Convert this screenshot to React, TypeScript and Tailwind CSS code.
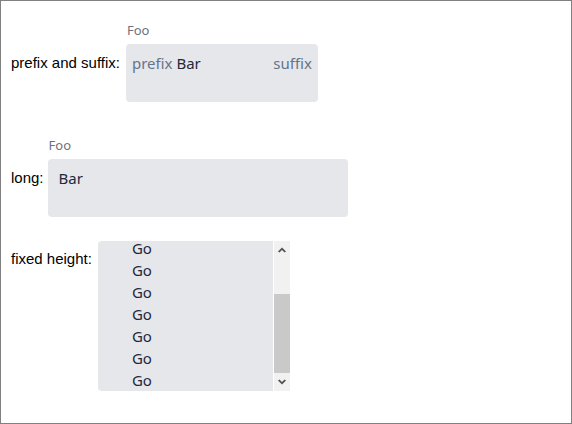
import { useEffect, useRef } from "react";

// ── Field with floating caption + prefix / suffix ─────────────────────────────

const BOX_FONT = { fontFamily: '"Noto Sans", "Open Sans", sans-serif' };

function Caption({ text }: { text: string }) {
  return (
    <div className="mb-[5px] pl-[1px] text-[13px] leading-[18px] text-[#6b7280]" style={BOX_FONT}>
      {text}
    </div>
  );
}

// ── Classic scrollbar (drawn, the native one is overlay in headless) ─────────

function Chevron({ up }: { up?: boolean }) {
  return (
    <svg width="16" height="17" viewBox="0 0 16 17" className={up ? "" : "rotate-180"}>
      <path d="M4 10.5 L8 6.5 L12 10.5 L10.6 11.5 L8 9 L5.4 11.5 Z" fill="#505050" />
    </svg>
  );
}

function Scrollbar() {
  return (
    <div className="ml-[1px] flex w-[16px] flex-col bg-[#f1f1f1]">
      <Chevron up />
      <div className="flex-1 pt-[36px]">
        <div className="h-[79px] bg-[#c9c9c9]" />
      </div>
      <Chevron />
    </div>
  );
}

// ── Page ───────────────────────────────────────────────────────────────────────

export default function App() {
  const listRef = useRef<HTMLDivElement>(null);

  // the list sits scrolled to the bottom in the reference
  useEffect(() => {
    if (listRef.current) listRef.current.scrollTop = listRef.current.scrollHeight;
  }, []);

  return (
    <div
      className="h-[424px] w-[572px] overflow-hidden border border-[#808080] bg-white pl-[10px] pt-[20px] text-[15px] text-black"
      style={{ fontFamily: '"Liberation Sans", Arial, sans-serif' }}
    >
      {/* prefix and suffix */}
      <div className="flex items-start">
        <label className="mt-[32px] leading-[20px]">prefix and suffix:</label>
        <div className="ml-[6px]">
          <Caption text="Foo" />
          <div
            className="flex h-[58px] w-[192px] justify-between rounded-[4px] bg-[#e5e7eb] px-[6px] pt-[9px] text-[15px] leading-[20px]"
            style={BOX_FONT}
          >
            <span>
              <span className="text-[#64748b]">prefix</span>{" "}
              <span className="text-[#1e293b]">Bar</span>
            </span>
            <span className="text-[#64748b]">suffix</span>
          </div>
        </div>
      </div>

      {/* long */}
      <div className="mt-[34px] flex items-start">
        <label className="mt-[32px] leading-[20px]">long:</label>
        <div className="ml-[4px]">
          <Caption text="Foo" />
          <div
            className="h-[58px] w-[300px] rounded-[4px] bg-[#e5e7eb] px-[11px] pt-[9px] text-[15px] leading-[20px] text-[#1e293b]"
            style={BOX_FONT}
          >
            Bar
          </div>
        </div>
      </div>

      {/* fixed height */}
      <div className="mt-[24px] flex items-start">
        <label className="mt-[8px] leading-[20px]">fixed height:</label>
        <div className="ml-[6px] flex h-[150px]">
          <div
            ref={listRef}
            className="w-[175px] overflow-y-auto rounded-l-[4px] bg-[#e5e7eb] text-[15px] leading-[22px] text-[#1e293b] [scrollbar-width:none]"
            style={BOX_FONT}
          >
            <ul className="pl-[34px]">
              {Array.from({ length: 10 }, (_, i) => (
                <li key={i}>Go</li>
              ))}
            </ul>
          </div>
          <Scrollbar />
        </div>
      </div>
    </div>
  );
}
